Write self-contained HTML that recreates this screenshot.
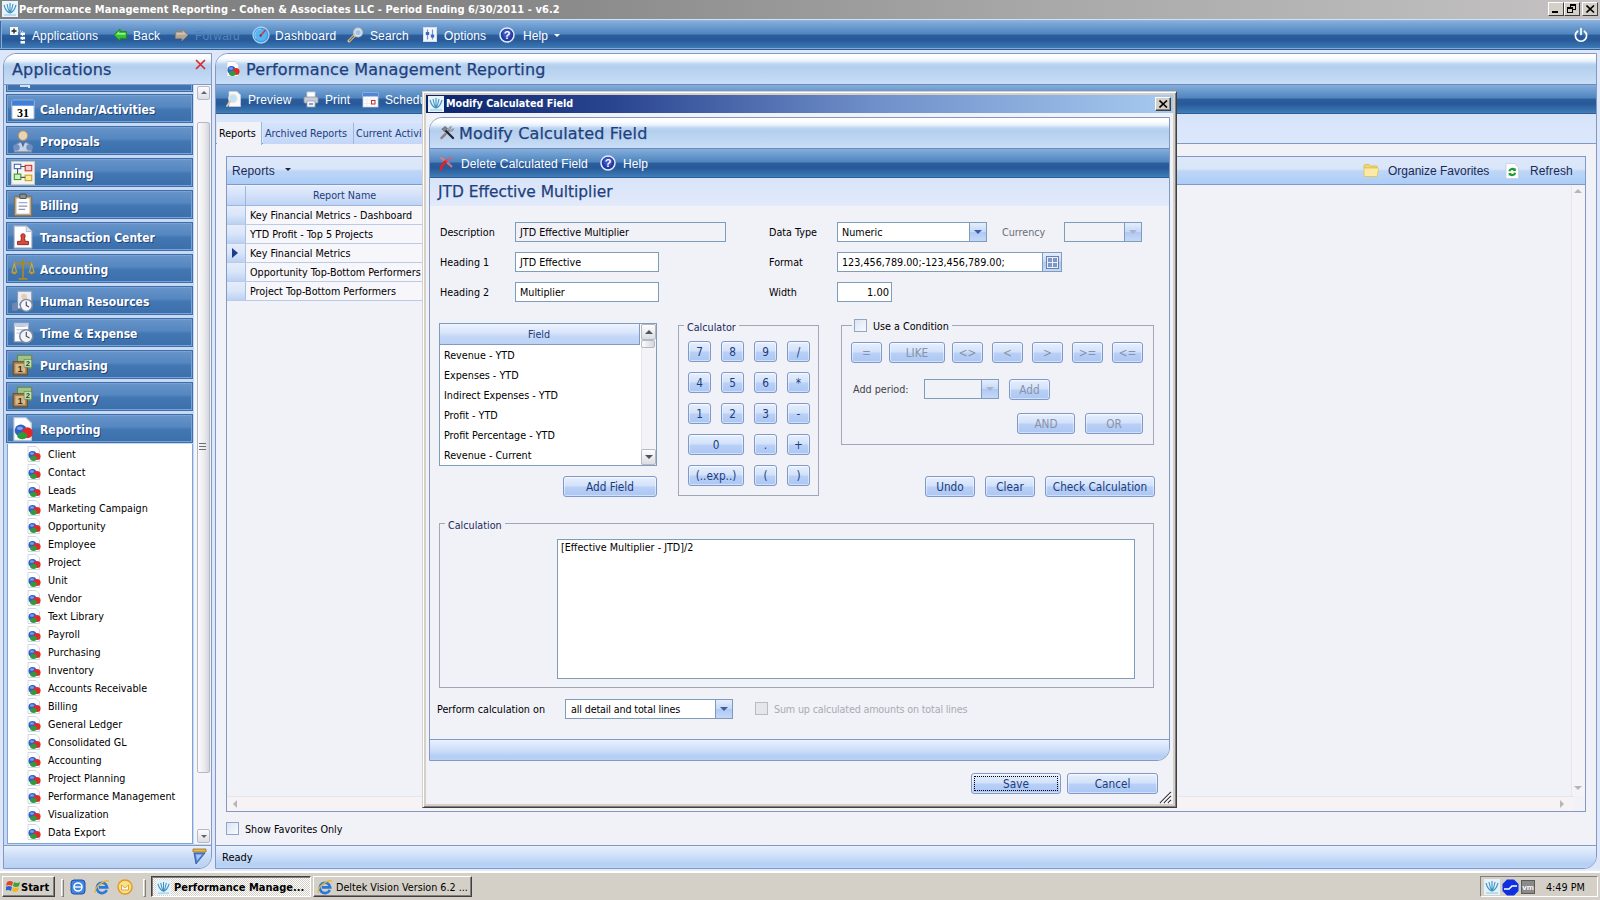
<!DOCTYPE html>
<html><head><meta charset="utf-8"><title>Performance Management Reporting</title>
<style>
*{box-sizing:border-box;margin:0;padding:0}
html,body{width:1600px;height:900px;overflow:hidden;background:#dde7f9}
body{position:relative;font-family:"DejaVu Sans Condensed","Liberation Sans",sans-serif;font-size:10.7px;color:#000}
.a{position:absolute;white-space:nowrap}
.tx{position:absolute;white-space:nowrap;line-height:14px;height:14px}
.ar{font-family:"Liberation Sans",sans-serif;font-size:12px;letter-spacing:.12px;color:#fff;line-height:14px;height:14px;position:absolute;white-space:nowrap}
.hd{position:absolute;white-space:nowrap;font-family:"DejaVu Sans",sans-serif;font-size:16px;color:#1f3f7d;line-height:22px;height:22px;letter-spacing:.15px;-webkit-text-stroke:.25px #1f3f7d}
.dk{background:linear-gradient(#86afdd 0%,#6e9dd0 18%,#5085be 46%,#2b5e9b 51%,#28599a 68%,#3570ac 88%,#457fba 100%)}
.lh{background:linear-gradient(#ffffff 0%,#fcfdff 13%,#e6f0fb 24%,#bcd5f0 34%,#b4cfed 44%,#c8ddf7 100%)}
.btn{position:absolute;border:1px solid #8099c8;border-radius:3px;background:linear-gradient(#f2f6fe 0%,#e1ebfc 12%,#d3e2fa 46%,#b9d0f6 54%,#abc7f4 100%);color:#1c3c7c;text-align:center;font-size:11.7px;line-height:19px;padding-top:1px;white-space:nowrap;box-shadow:inset 0 0 0 1px rgba(255,255,255,.45)}
.btn.dis{color:#8a93a6}
.inp{position:absolute;border:1px solid #7f9db9;background:#fff;line-height:19px;padding-left:4px;white-space:nowrap;overflow:hidden}
.dd{position:absolute;right:0;top:0;bottom:0;width:17px;border-left:1px solid #7f9db9;background:linear-gradient(#e4edfc,#c5d8f7 50%,#b0c9f3 52%,#c4d8f8)}
.dd:after{content:"";position:absolute;left:4px;top:7px;border:4px solid transparent;border-top:4px solid #3a5ea8;border-bottom:0}
.dd.dis:after{border-top-color:#a9b4c8}
.grp{position:absolute;border:1px solid #a0a8b8}
.lg{position:absolute;background:#f1f1f8;padding:0 3px;color:#1b2a5c;line-height:14px;height:14px;white-space:nowrap}
.nav{position:absolute;left:6px;width:187px;height:29px;border:1px solid #3f6ea6;box-shadow:inset 0 0 0 1px #7aa3d3;background:linear-gradient(#6795ca 0%,#5686bf 44%,#4177b3 54%,#3a6faa 100%)}
.nav b{position:absolute;left:33px;top:7px;font-size:12px;line-height:16px;color:#fff;letter-spacing:0;text-shadow:1px 1px 0 rgba(0,0,40,.45)}
.nav i{font-style:normal;position:absolute;left:4px;top:2px;width:24px;height:24px}
.tr{position:absolute;left:48px;line-height:14px;height:14px;white-space:nowrap}
.ti{position:absolute;left:26px;width:16px;height:16px}
.row{position:absolute;left:227px;width:197px;height:19px;border-bottom:1px solid #b9cbe8;background:#f6f6fb}
.row s{position:absolute;left:0;top:0;width:19px;height:18px;background:linear-gradient(#e6edfb,#d9e5f9 50%,#bcd1f2);border-right:1px solid #a9bfe3}
.row span{position:absolute;left:23px;top:3px;line-height:14px;white-space:nowrap}
.cb{position:absolute;width:13px;height:13px;border:1px solid #8da6c9;background:linear-gradient(135deg,#dde5f2,#f8fafd)}
</style></head><body>

<!-- ===== window title bar ===== -->
<div class="a" style="left:0;top:0;width:1600px;height:19px;background:linear-gradient(90deg,#7f7f7f 0%,#858585 30%,#a8a8a8 65%,#c4c2c2 100%)"></div>
<div class="a" style="left:0;top:19px;width:1600px;height:2px;background:#cfe1f8"></div>
<svg class="a" style="left:2px;top:1px" width="16" height="16" viewBox="0 0 16 16"><rect width="16" height="16" fill="#e8f4fb"/><path d="M2 4 Q4 11 8 12 Q12 11 14 4 M5 3 Q6 9 8 12 Q10 9 11 3 M8 2 V12" stroke="#3f93c4" stroke-width="1.1" fill="none"/><path d="M2 14 H14" stroke="#8cc4e0" stroke-width="1"/></svg>
<div class="tx" style="left:19px;top:3px;font-weight:bold;color:#fff;font-size:11px;letter-spacing:.08px">Performance Management Reporting - Cohen &amp; Associates LLC - Period Ending 6/30/2011 - v6.2</div>
<div class="a" style="left:1548px;top:2px;width:50px;height:14px">
 <div class="a" style="left:0;top:0;width:16px;height:14px;background:#d4d0c8;border:1px solid;border-color:#fff #404040 #404040 #fff"><div class="a" style="left:3px;top:8px;width:6px;height:2px;background:#000"></div></div>
 <div class="a" style="left:16px;top:0;width:16px;height:14px;background:#d4d0c8;border:1px solid;border-color:#fff #404040 #404040 #fff"><div class="a" style="left:5px;top:1px;width:6px;height:6px;border:1px solid #000;border-top-width:2px"></div><div class="a" style="left:2px;top:4px;width:6px;height:6px;border:1px solid #000;border-top-width:2px;background:#d4d0c8"></div></div>
 <div class="a" style="left:34px;top:0;width:16px;height:14px;background:#d4d0c8;border:1px solid;border-color:#fff #404040 #404040 #fff"><svg class="a" style="left:3px;top:2px" width="9" height="8" viewBox="0 0 9 8"><path d="M0.5 0.5 L8 7.5 M8 0.5 L0.5 7.5" stroke="#000" stroke-width="1.6"/></svg></div>
</div>


<!-- ===== menu toolbar ===== -->
<div class="a dk" style="left:0;top:20px;width:1600px;height:30px;border-top:1px solid #8fb2dc;border-bottom:1px solid #2f5f97;box-shadow:inset 0 -1px 0 #7fa9d9,inset 1px 0 0 #3a6aa5,inset 2px 0 0 #86add9"></div>
<svg class="a" style="left:10px;top:27px" width="16" height="17" viewBox="0 0 16 17"><rect x="0" y="0" width="8" height="8" fill="#f6f7fb"/><path d="M1.5 4 H6.5 M4 1.5 V6.5" stroke="#222" stroke-width="1.3"/><path d="M8 4 H12 M12.5 4 V15" stroke="#cfdcf0" stroke-width="1" stroke-dasharray="1 1"/><rect x="10.5" y="5.5" width="4.5" height="2.6" fill="#fff"/><rect x="10.5" y="9.8" width="4.5" height="2.6" fill="#fff"/><rect x="10.5" y="14" width="4.5" height="2.6" fill="#fff"/></svg>
<div class="ar" style="left:32px;top:29px">Applications</div>
<svg class="a" style="left:113px;top:28px" width="15" height="14" viewBox="0 0 15 14"><path d="M1 7 L7 1 V3.6 H13.5 V10.4 H7 V13 Z" fill="#35c432" stroke="#1c8e1e" stroke-width="1" stroke-linejoin="round"/><path d="M3 6.6 L6 3.6 V5 H12.4 V6.8 Z" fill="#b4f5a8" opacity=".85"/></svg>
<div class="ar" style="left:133px;top:29px">Back</div>
<svg class="a" style="left:174px;top:28px" width="15" height="14" viewBox="0 0 15 14"><path d="M14 7 L8 1 V3.6 H1.5 V10.4 H8 V13 Z" fill="#b5a595" stroke="#8c8072" stroke-width="1" stroke-linejoin="round"/><path d="M12 6.6 L9 3.6 V5 H2.6 V6.8 Z" fill="#d8ccc0" opacity=".8"/></svg>
<div class="ar" style="left:195px;top:29px;color:#5484bc">Forward</div>
<svg class="a" style="left:252px;top:26px" width="18" height="18" viewBox="0 0 18 18"><circle cx="9" cy="9" r="8" fill="#3f9ae6" stroke="#a9d2f2" stroke-width="1.3"/><circle cx="9" cy="9" r="6" fill="#57b4ee"/><path d="M4 12.5 A6 6 0 0 1 9 3" stroke="#8fd0f8" stroke-width="1" fill="none"/><path d="M8.5 9.8 L13 4.6" stroke="#d0383e" stroke-width="1.5" stroke-linecap="round"/><circle cx="8.6" cy="9.6" r="1.1" fill="#7a2a3a"/></svg>
<div class="ar" style="left:275px;top:29px;letter-spacing:.3px">Dashboard</div>
<svg class="a" style="left:347px;top:27px" width="17" height="16" viewBox="0 0 17 16"><path d="M2 14 L8 8" stroke="#d8c9a0" stroke-width="3" stroke-linecap="round"/><path d="M2 14 L7 9" stroke="#8a6e3a" stroke-width="1.2"/><circle cx="11" cy="5.5" r="4.2" fill="#dfe9f5" stroke="#c9c9c9" stroke-width="1.4"/><circle cx="11" cy="5.5" r="2.6" fill="#9ec3e8"/></svg>
<div class="ar" style="left:370px;top:29px">Search</div>
<svg class="a" style="left:423px;top:27px" width="15" height="15" viewBox="0 0 15 15"><rect x=".5" y=".5" width="13" height="14" fill="#f4f6fc" stroke="#d5dcec"/><path d="M4.5 2.5 V12.5 M9.5 2.5 V12.5" stroke="#6f95d4" stroke-width="1.2"/><rect x="2.8" y="5" width="3.4" height="3" fill="#3a68c0"/><rect x="7.8" y="7.5" width="3.4" height="3" fill="#3a68c0"/></svg>
<div class="ar" style="left:444px;top:29px">Options</div>
<svg class="a" style="left:499px;top:27px" width="16" height="16" viewBox="0 0 16 16"><circle cx="8" cy="8" r="7" fill="#2438a4" stroke="#e4eafa" stroke-width="1.5"/><circle cx="8" cy="6.5" r="4.5" fill="#4a66d0" opacity=".6"/><text x="8" y="12" text-anchor="middle" font-family="Liberation Sans" font-weight="bold" font-size="11" fill="#fff">?</text></svg>
<div class="ar" style="left:523px;top:29px">Help</div>
<div class="a" style="left:554px;top:34px;border:3px solid transparent;border-top:3px solid #fff;border-bottom:0"></div>
<svg class="a" style="left:1573px;top:27px" width="16" height="16" viewBox="0 0 16 16"><path d="M4.6 4.2 A5.6 5.6 0 1 0 11.4 4.2" fill="none" stroke="#fff" stroke-width="1.7" stroke-linecap="round"/><path d="M8 1.5 V7.5" stroke="#fff" stroke-width="1.7" stroke-linecap="round"/></svg>


<!-- ===== left panel ===== -->
<!--LP-->
<div class="a" style="left:3px;top:53px;width:209px;height:816px;border:1px solid #8299c4;border-radius:13px 0 13px 0;background:#c6daf5;overflow:hidden">
<div class="a lh" style="left:0;top:0;width:207px;height:31px;border-bottom:1px solid #8299c4"></div>
<div class="a" style="left:0;top:791px;width:207px;height:23px;border-top:1px solid #8299c4;background:linear-gradient(#e8f0fd,#c6daf6 55%,#b8d0f2)"></div>
</div>
<div class="hd" style="left:12px;top:59px">Applications</div>
<svg class="a" style="left:195px;top:59px" width="11" height="11" viewBox="0 0 11 11"><path d="M1 1 L10 10 M10 1 L1 10" stroke="#d9282e" stroke-width="1.7"/></svg>
<div class="nav" style="top:76px;height:16px;clip-path:inset(9px 0 0 0)"></div>
<div class="a" style="left:20px;top:85px;width:10px;height:2px;background:#cfe0f5"></div><div class="a" style="left:28px;top:85px;width:2px;height:3px;background:#dfe8f5"></div>
<div class="nav" style="top:94px"><i><svg width="24" height="24" viewBox="0 0 22 22"><rect x="1" y="3" width="20" height="17" rx="1" fill="#fff" stroke="#c8d4e8"/><rect x="1" y="3" width="20" height="5" fill="#3f7fd8"/><text x="11" y="18" text-anchor="middle" font-family="Liberation Serif" font-weight="bold" font-size="11" fill="#000">31</text></svg></i><b>Calendar/Activities</b></div>
<div class="nav" style="top:126px"><i><svg width="24" height="24" viewBox="0 0 22 22"><circle cx="11" cy="6" r="4.5" fill="#e9d3b8" stroke="#a08a70"/><path d="M3 21 Q3 12 11 12 Q19 12 19 21 Z" fill="#c9d2de" stroke="#7f8ea6"/><path d="M9 12 L11 17 L13 12 Z" fill="#3d6fc0"/><circle cx="5" cy="17" r="3" fill="#6f8fc4"/><circle cx="17" cy="17" r="3" fill="#6f8fc4"/></svg></i><b>Proposals</b></div>
<div class="nav" style="top:158px"><i><svg width="24" height="24" viewBox="0 0 22 22"><rect x=".5" y=".5" width="21" height="21" fill="#f5f5f0" stroke="#c9c9c0"/><rect x="3" y="3" width="6" height="4" fill="#fff" stroke="#3a66c0"/><rect x="13" y="4" width="6" height="5" fill="#f9c9c9" stroke="#d03030"/><rect x="3" y="12" width="6" height="5" fill="#d0f0c0" stroke="#3a9a30"/><rect x="13" y="13" width="6" height="5" fill="#fbe9a0" stroke="#c9a020"/><path d="M6 7 V12 M9 5 H13 M9 15 H13" stroke="#555" stroke-width="1"/></svg></i><b>Planning</b></div>
<div class="nav" style="top:190px"><i><svg width="24" height="24" viewBox="0 0 22 22"><rect x="3" y="3" width="16" height="18" rx="1" fill="#b8a88c" stroke="#7d6e54"/><rect x="5" y="5" width="12" height="14" fill="#fff"/><rect x="8" y="1" width="6" height="4" rx="1" fill="#8f8f8f" stroke="#555"/><path d="M7 9 H15 M7 12 H15 M7 15 H13" stroke="#8a96b0" stroke-width="1"/></svg></i><b>Billing</b></div>
<div class="nav" style="top:222px"><i><svg width="24" height="24" viewBox="0 0 22 22"><path d="M3 1 H14 L19 6 V21 H3 Z" fill="#fff" stroke="#b9c2d2"/><path d="M14 1 V6 H19" fill="#dfe6f2" stroke="#b9c2d2"/><path d="M6 18 H16 V15 H13 Q12 12 13 10 Q13 8 11 8 Q9 8 9 10 Q10 12 9 15 H6 Z" fill="#d94a3a" stroke="#8e241a" stroke-width=".8"/></svg></i><b>Transaction Center</b></div>
<div class="nav" style="top:254px"><i><svg width="24" height="24" viewBox="0 0 22 22"><path d="M11 2 V19 M3 6 H19 M7 20 H15" stroke="#a98a20" stroke-width="1.6"/><path d="M3 6 L0.8 14 H5.2 Z M19 6 L16.8 14 H21.2 Z" fill="none" stroke="#c9a83a" stroke-width="1"/><path d="M.5 14 Q3 17 5.5 14 Z M16.5 14 Q19 17 21.5 14 Z" fill="#e4c860" stroke="#a98a20" stroke-width=".8"/></svg></i><b>Accounting</b></div>
<div class="nav" style="top:286px"><i><svg width="24" height="24" viewBox="0 0 22 22"><rect x="6" y="2" width="13" height="16" fill="#e9eef6" stroke="#8d9bb4"/><circle cx="12" cy="7" r="2.6" fill="#e8cdb0"/><path d="M7.5 15 Q8 10.5 12 10.5 Q16 10.5 16.5 15 Z" fill="#5b7fc0"/><circle cx="14" cy="15" r="5.5" fill="#f4f6fa" stroke="#7f8aa0" stroke-width="1.3"/><path d="M14 11.5 V15 L16.5 16.5" stroke="#445" stroke-width="1" fill="none"/><path d="M1 13 L6 12 V20 H1 Z" fill="#6f86b0"/></svg></i><b>Human Resources</b></div>
<div class="nav" style="top:318px"><i><svg width="24" height="24" viewBox="0 0 22 22"><rect x="3" y="2" width="13" height="17" fill="#fff" stroke="#9aa6bc"/><path d="M5 5 H13 M5 8 H13 M5 11 H10" stroke="#b5bfd2"/><rect x="3" y="2" width="13" height="3" fill="#c4cfe2"/><circle cx="14" cy="14" r="6" fill="#f1f3f8" stroke="#7f8aa0" stroke-width="1.4"/><path d="M14 10 V14 L17 15.5" stroke="#445" stroke-width="1" fill="none"/></svg></i><b>Time &amp; Expense</b></div>
<div class="nav" style="top:350px"><i><svg width="24" height="24" viewBox="0 0 22 22"><rect x="6" y="2" width="13" height="12" fill="#9fc48a" stroke="#5d8a4a"/><rect x="2" y="8" width="13" height="12" fill="#a9824f" stroke="#6b4e28"/><rect x="4" y="10" width="9" height="8" fill="#d9b98a"/><text x="8.5" y="17.5" text-anchor="middle" font-family="Liberation Sans" font-weight="bold" font-size="8" fill="#3a2a10">1</text><rect x="12" y="6" width="7" height="7" fill="#c9dfb8" stroke="#5d8a4a" stroke-width=".6"/><text x="15.5" y="12" text-anchor="middle" font-family="Liberation Sans" font-weight="bold" font-size="7" fill="#2a4a1a">2</text></svg></i><b>Purchasing</b></div>
<div class="nav" style="top:382px"><i><svg width="24" height="24" viewBox="0 0 22 22"><rect x="6" y="2" width="13" height="12" fill="#9fc48a" stroke="#5d8a4a"/><rect x="2" y="8" width="13" height="12" fill="#a9824f" stroke="#6b4e28"/><rect x="4" y="10" width="9" height="8" fill="#d9b98a"/><text x="8.5" y="17.5" text-anchor="middle" font-family="Liberation Sans" font-weight="bold" font-size="8" fill="#3a2a10">1</text><rect x="12" y="6" width="7" height="7" fill="#c9dfb8" stroke="#5d8a4a" stroke-width=".6"/><text x="15.5" y="12" text-anchor="middle" font-family="Liberation Sans" font-weight="bold" font-size="7" fill="#2a4a1a">2</text></svg></i><b>Inventory</b></div>
<div class="nav" style="top:414px"><i><svg width="24" height="24" viewBox="0 0 16 16"><path d="M2 .5 H10 L13.5 4 V15.5 H2 Z" fill="#fff" stroke="#c5cede" stroke-width=".8"/><circle cx="6.5" cy="9" r="4" fill="#2f5fc8"/><circle cx="11" cy="10.5" r="3.6" fill="#e02a2a"/><ellipse cx="7.5" cy="12.5" rx="3.4" ry="2.4" fill="#2f9a3a"/><ellipse cx="6" cy="7.5" rx="2" ry="1.2" fill="#8fb0ee" opacity=".8"/></svg></i><b>Reporting</b></div>
<div class="a" style="left:7px;top:444px;width:186px;height:400px;background:#fff;border:1px solid #7fa3d8;border-top:0"></div>
<div class="ti" style="top:446px"><svg width="16" height="16" viewBox="0 0 16 16"><path d="M2 .5 H10 L13.5 4 V15.5 H2 Z" fill="#fff" stroke="#c5cede" stroke-width=".8"/><circle cx="6.5" cy="9" r="4" fill="#2f5fc8"/><circle cx="11" cy="10.5" r="3.6" fill="#e02a2a"/><ellipse cx="7.5" cy="12.5" rx="3.4" ry="2.4" fill="#2f9a3a"/><ellipse cx="6" cy="7.5" rx="2" ry="1.2" fill="#8fb0ee" opacity=".8"/></svg></div><div class="tr" style="top:448px">Client</div>
<div class="ti" style="top:464px"><svg width="16" height="16" viewBox="0 0 16 16"><path d="M2 .5 H10 L13.5 4 V15.5 H2 Z" fill="#fff" stroke="#c5cede" stroke-width=".8"/><circle cx="6.5" cy="9" r="4" fill="#2f5fc8"/><circle cx="11" cy="10.5" r="3.6" fill="#e02a2a"/><ellipse cx="7.5" cy="12.5" rx="3.4" ry="2.4" fill="#2f9a3a"/><ellipse cx="6" cy="7.5" rx="2" ry="1.2" fill="#8fb0ee" opacity=".8"/></svg></div><div class="tr" style="top:466px">Contact</div>
<div class="ti" style="top:482px"><svg width="16" height="16" viewBox="0 0 16 16"><path d="M2 .5 H10 L13.5 4 V15.5 H2 Z" fill="#fff" stroke="#c5cede" stroke-width=".8"/><circle cx="6.5" cy="9" r="4" fill="#2f5fc8"/><circle cx="11" cy="10.5" r="3.6" fill="#e02a2a"/><ellipse cx="7.5" cy="12.5" rx="3.4" ry="2.4" fill="#2f9a3a"/><ellipse cx="6" cy="7.5" rx="2" ry="1.2" fill="#8fb0ee" opacity=".8"/></svg></div><div class="tr" style="top:484px">Leads</div>
<div class="ti" style="top:500px"><svg width="16" height="16" viewBox="0 0 16 16"><path d="M2 .5 H10 L13.5 4 V15.5 H2 Z" fill="#fff" stroke="#c5cede" stroke-width=".8"/><circle cx="6.5" cy="9" r="4" fill="#2f5fc8"/><circle cx="11" cy="10.5" r="3.6" fill="#e02a2a"/><ellipse cx="7.5" cy="12.5" rx="3.4" ry="2.4" fill="#2f9a3a"/><ellipse cx="6" cy="7.5" rx="2" ry="1.2" fill="#8fb0ee" opacity=".8"/></svg></div><div class="tr" style="top:502px">Marketing Campaign</div>
<div class="ti" style="top:518px"><svg width="16" height="16" viewBox="0 0 16 16"><path d="M2 .5 H10 L13.5 4 V15.5 H2 Z" fill="#fff" stroke="#c5cede" stroke-width=".8"/><circle cx="6.5" cy="9" r="4" fill="#2f5fc8"/><circle cx="11" cy="10.5" r="3.6" fill="#e02a2a"/><ellipse cx="7.5" cy="12.5" rx="3.4" ry="2.4" fill="#2f9a3a"/><ellipse cx="6" cy="7.5" rx="2" ry="1.2" fill="#8fb0ee" opacity=".8"/></svg></div><div class="tr" style="top:520px">Opportunity</div>
<div class="ti" style="top:536px"><svg width="16" height="16" viewBox="0 0 16 16"><path d="M2 .5 H10 L13.5 4 V15.5 H2 Z" fill="#fff" stroke="#c5cede" stroke-width=".8"/><circle cx="6.5" cy="9" r="4" fill="#2f5fc8"/><circle cx="11" cy="10.5" r="3.6" fill="#e02a2a"/><ellipse cx="7.5" cy="12.5" rx="3.4" ry="2.4" fill="#2f9a3a"/><ellipse cx="6" cy="7.5" rx="2" ry="1.2" fill="#8fb0ee" opacity=".8"/></svg></div><div class="tr" style="top:538px">Employee</div>
<div class="ti" style="top:554px"><svg width="16" height="16" viewBox="0 0 16 16"><path d="M2 .5 H10 L13.5 4 V15.5 H2 Z" fill="#fff" stroke="#c5cede" stroke-width=".8"/><circle cx="6.5" cy="9" r="4" fill="#2f5fc8"/><circle cx="11" cy="10.5" r="3.6" fill="#e02a2a"/><ellipse cx="7.5" cy="12.5" rx="3.4" ry="2.4" fill="#2f9a3a"/><ellipse cx="6" cy="7.5" rx="2" ry="1.2" fill="#8fb0ee" opacity=".8"/></svg></div><div class="tr" style="top:556px">Project</div>
<div class="ti" style="top:572px"><svg width="16" height="16" viewBox="0 0 16 16"><path d="M2 .5 H10 L13.5 4 V15.5 H2 Z" fill="#fff" stroke="#c5cede" stroke-width=".8"/><circle cx="6.5" cy="9" r="4" fill="#2f5fc8"/><circle cx="11" cy="10.5" r="3.6" fill="#e02a2a"/><ellipse cx="7.5" cy="12.5" rx="3.4" ry="2.4" fill="#2f9a3a"/><ellipse cx="6" cy="7.5" rx="2" ry="1.2" fill="#8fb0ee" opacity=".8"/></svg></div><div class="tr" style="top:574px">Unit</div>
<div class="ti" style="top:590px"><svg width="16" height="16" viewBox="0 0 16 16"><path d="M2 .5 H10 L13.5 4 V15.5 H2 Z" fill="#fff" stroke="#c5cede" stroke-width=".8"/><circle cx="6.5" cy="9" r="4" fill="#2f5fc8"/><circle cx="11" cy="10.5" r="3.6" fill="#e02a2a"/><ellipse cx="7.5" cy="12.5" rx="3.4" ry="2.4" fill="#2f9a3a"/><ellipse cx="6" cy="7.5" rx="2" ry="1.2" fill="#8fb0ee" opacity=".8"/></svg></div><div class="tr" style="top:592px">Vendor</div>
<div class="ti" style="top:608px"><svg width="16" height="16" viewBox="0 0 16 16"><path d="M2 .5 H10 L13.5 4 V15.5 H2 Z" fill="#fff" stroke="#c5cede" stroke-width=".8"/><circle cx="6.5" cy="9" r="4" fill="#2f5fc8"/><circle cx="11" cy="10.5" r="3.6" fill="#e02a2a"/><ellipse cx="7.5" cy="12.5" rx="3.4" ry="2.4" fill="#2f9a3a"/><ellipse cx="6" cy="7.5" rx="2" ry="1.2" fill="#8fb0ee" opacity=".8"/></svg></div><div class="tr" style="top:610px">Text Library</div>
<div class="ti" style="top:626px"><svg width="16" height="16" viewBox="0 0 16 16"><path d="M2 .5 H10 L13.5 4 V15.5 H2 Z" fill="#fff" stroke="#c5cede" stroke-width=".8"/><circle cx="6.5" cy="9" r="4" fill="#2f5fc8"/><circle cx="11" cy="10.5" r="3.6" fill="#e02a2a"/><ellipse cx="7.5" cy="12.5" rx="3.4" ry="2.4" fill="#2f9a3a"/><ellipse cx="6" cy="7.5" rx="2" ry="1.2" fill="#8fb0ee" opacity=".8"/></svg></div><div class="tr" style="top:628px">Payroll</div>
<div class="ti" style="top:644px"><svg width="16" height="16" viewBox="0 0 16 16"><path d="M2 .5 H10 L13.5 4 V15.5 H2 Z" fill="#fff" stroke="#c5cede" stroke-width=".8"/><circle cx="6.5" cy="9" r="4" fill="#2f5fc8"/><circle cx="11" cy="10.5" r="3.6" fill="#e02a2a"/><ellipse cx="7.5" cy="12.5" rx="3.4" ry="2.4" fill="#2f9a3a"/><ellipse cx="6" cy="7.5" rx="2" ry="1.2" fill="#8fb0ee" opacity=".8"/></svg></div><div class="tr" style="top:646px">Purchasing</div>
<div class="ti" style="top:662px"><svg width="16" height="16" viewBox="0 0 16 16"><path d="M2 .5 H10 L13.5 4 V15.5 H2 Z" fill="#fff" stroke="#c5cede" stroke-width=".8"/><circle cx="6.5" cy="9" r="4" fill="#2f5fc8"/><circle cx="11" cy="10.5" r="3.6" fill="#e02a2a"/><ellipse cx="7.5" cy="12.5" rx="3.4" ry="2.4" fill="#2f9a3a"/><ellipse cx="6" cy="7.5" rx="2" ry="1.2" fill="#8fb0ee" opacity=".8"/></svg></div><div class="tr" style="top:664px">Inventory</div>
<div class="ti" style="top:680px"><svg width="16" height="16" viewBox="0 0 16 16"><path d="M2 .5 H10 L13.5 4 V15.5 H2 Z" fill="#fff" stroke="#c5cede" stroke-width=".8"/><circle cx="6.5" cy="9" r="4" fill="#2f5fc8"/><circle cx="11" cy="10.5" r="3.6" fill="#e02a2a"/><ellipse cx="7.5" cy="12.5" rx="3.4" ry="2.4" fill="#2f9a3a"/><ellipse cx="6" cy="7.5" rx="2" ry="1.2" fill="#8fb0ee" opacity=".8"/></svg></div><div class="tr" style="top:682px">Accounts Receivable</div>
<div class="ti" style="top:698px"><svg width="16" height="16" viewBox="0 0 16 16"><path d="M2 .5 H10 L13.5 4 V15.5 H2 Z" fill="#fff" stroke="#c5cede" stroke-width=".8"/><circle cx="6.5" cy="9" r="4" fill="#2f5fc8"/><circle cx="11" cy="10.5" r="3.6" fill="#e02a2a"/><ellipse cx="7.5" cy="12.5" rx="3.4" ry="2.4" fill="#2f9a3a"/><ellipse cx="6" cy="7.5" rx="2" ry="1.2" fill="#8fb0ee" opacity=".8"/></svg></div><div class="tr" style="top:700px">Billing</div>
<div class="ti" style="top:716px"><svg width="16" height="16" viewBox="0 0 16 16"><path d="M2 .5 H10 L13.5 4 V15.5 H2 Z" fill="#fff" stroke="#c5cede" stroke-width=".8"/><circle cx="6.5" cy="9" r="4" fill="#2f5fc8"/><circle cx="11" cy="10.5" r="3.6" fill="#e02a2a"/><ellipse cx="7.5" cy="12.5" rx="3.4" ry="2.4" fill="#2f9a3a"/><ellipse cx="6" cy="7.5" rx="2" ry="1.2" fill="#8fb0ee" opacity=".8"/></svg></div><div class="tr" style="top:718px">General Ledger</div>
<div class="ti" style="top:734px"><svg width="16" height="16" viewBox="0 0 16 16"><path d="M2 .5 H10 L13.5 4 V15.5 H2 Z" fill="#fff" stroke="#c5cede" stroke-width=".8"/><circle cx="6.5" cy="9" r="4" fill="#2f5fc8"/><circle cx="11" cy="10.5" r="3.6" fill="#e02a2a"/><ellipse cx="7.5" cy="12.5" rx="3.4" ry="2.4" fill="#2f9a3a"/><ellipse cx="6" cy="7.5" rx="2" ry="1.2" fill="#8fb0ee" opacity=".8"/></svg></div><div class="tr" style="top:736px">Consolidated GL</div>
<div class="ti" style="top:752px"><svg width="16" height="16" viewBox="0 0 16 16"><path d="M2 .5 H10 L13.5 4 V15.5 H2 Z" fill="#fff" stroke="#c5cede" stroke-width=".8"/><circle cx="6.5" cy="9" r="4" fill="#2f5fc8"/><circle cx="11" cy="10.5" r="3.6" fill="#e02a2a"/><ellipse cx="7.5" cy="12.5" rx="3.4" ry="2.4" fill="#2f9a3a"/><ellipse cx="6" cy="7.5" rx="2" ry="1.2" fill="#8fb0ee" opacity=".8"/></svg></div><div class="tr" style="top:754px">Accounting</div>
<div class="ti" style="top:770px"><svg width="16" height="16" viewBox="0 0 16 16"><path d="M2 .5 H10 L13.5 4 V15.5 H2 Z" fill="#fff" stroke="#c5cede" stroke-width=".8"/><circle cx="6.5" cy="9" r="4" fill="#2f5fc8"/><circle cx="11" cy="10.5" r="3.6" fill="#e02a2a"/><ellipse cx="7.5" cy="12.5" rx="3.4" ry="2.4" fill="#2f9a3a"/><ellipse cx="6" cy="7.5" rx="2" ry="1.2" fill="#8fb0ee" opacity=".8"/></svg></div><div class="tr" style="top:772px">Project Planning</div>
<div class="ti" style="top:788px"><svg width="16" height="16" viewBox="0 0 16 16"><path d="M2 .5 H10 L13.5 4 V15.5 H2 Z" fill="#fff" stroke="#c5cede" stroke-width=".8"/><circle cx="6.5" cy="9" r="4" fill="#2f5fc8"/><circle cx="11" cy="10.5" r="3.6" fill="#e02a2a"/><ellipse cx="7.5" cy="12.5" rx="3.4" ry="2.4" fill="#2f9a3a"/><ellipse cx="6" cy="7.5" rx="2" ry="1.2" fill="#8fb0ee" opacity=".8"/></svg></div><div class="tr" style="top:790px">Performance Management</div>
<div class="ti" style="top:806px"><svg width="16" height="16" viewBox="0 0 16 16"><path d="M2 .5 H10 L13.5 4 V15.5 H2 Z" fill="#fff" stroke="#c5cede" stroke-width=".8"/><circle cx="6.5" cy="9" r="4" fill="#2f5fc8"/><circle cx="11" cy="10.5" r="3.6" fill="#e02a2a"/><ellipse cx="7.5" cy="12.5" rx="3.4" ry="2.4" fill="#2f9a3a"/><ellipse cx="6" cy="7.5" rx="2" ry="1.2" fill="#8fb0ee" opacity=".8"/></svg></div><div class="tr" style="top:808px">Visualization</div>
<div class="ti" style="top:824px"><svg width="16" height="16" viewBox="0 0 16 16"><path d="M2 .5 H10 L13.5 4 V15.5 H2 Z" fill="#fff" stroke="#c5cede" stroke-width=".8"/><circle cx="6.5" cy="9" r="4" fill="#2f5fc8"/><circle cx="11" cy="10.5" r="3.6" fill="#e02a2a"/><ellipse cx="7.5" cy="12.5" rx="3.4" ry="2.4" fill="#2f9a3a"/><ellipse cx="6" cy="7.5" rx="2" ry="1.2" fill="#8fb0ee" opacity=".8"/></svg></div><div class="tr" style="top:826px">Data Export</div>
<div class="a" style="left:194px;top:85px;width:17px;height:759px;background:#f4f4f9"></div>
<div class="a" style="left:197px;top:86px;width:13px;height:14px;border:1px solid #b4b9c6;border-radius:2px;background:linear-gradient(#fdfdfd,#dcdde3)"></div><div class="a" style="left:201px;top:91px;border:3px solid transparent;border-bottom:3px solid #5f6472;border-top:0"></div>
<div class="a" style="left:197px;top:122px;width:13px;height:651px;border:1px solid #b4b9c6;border-radius:2px;background:linear-gradient(90deg,#fcfcfd,#e9e9ee 60%,#d5d6dd)"></div>
<div class="a" style="left:199px;top:443px;width:7px;height:1px;background:#6a6f7c;box-shadow:0 3px 0 #6a6f7c,0 6px 0 #6a6f7c"></div>
<div class="a" style="left:197px;top:829px;width:13px;height:14px;border:1px solid #b4b9c6;border-radius:2px;background:linear-gradient(#fdfdfd,#dcdde3)"></div><div class="a" style="left:201px;top:835px;border:3px solid transparent;border-top:3px solid #5f6472;border-bottom:0"></div>
<svg class="a" style="left:192px;top:848px" width="16" height="17" viewBox="0 0 16 17"><path d="M1 1 H14 V4 H1 Z" fill="#e9b84a" stroke="#9a6e20" stroke-width=".8"/><path d="M2 5 H13 L4 16 Z" fill="#4f86d8" stroke="#2a4e9a" stroke-width=".8"/><path d="M4 6.5 H10 L5 12.5 Z" fill="#a9c8f4"/></svg>
<!--/LP-->

<!-- ===== main panel ===== -->
<!--MP-->
<div class="a" style="left:215px;top:53px;width:1382px;height:816px;border:1px solid #8299c4;border-radius:13px 0 13px 0;background:#f1f1f8;overflow:hidden">
<div class="a lh" style="left:0;top:0;width:1380px;height:31px;border-bottom:1px solid #7088b8"></div>
<div class="a dk" style="left:0;top:31px;width:1380px;height:29px;border-bottom:1px solid #2c5e98"></div>
<div class="a" style="left:0;top:60px;width:1380px;height:30px;background:linear-gradient(#d6e4fb,#dbe7fb);border-bottom:1px solid #8299c4"></div>
<div class="a" style="left:1px;top:68px;width:45px;height:23px;background:#f1f1f8;border-right:1px solid #9ab7e0"></div>
<div class="a" style="left:47px;top:68px;width:91px;height:22px;background:linear-gradient(#d5e3fa,#c3d7f8);border-right:1px solid #9ab7e0;border-top:1px solid #dbe7fb"></div>
<div class="a" style="left:138px;top:68px;width:120px;height:22px;background:linear-gradient(#d5e3fa,#c3d7f8);border-right:1px solid #9ab7e0;border-top:1px solid #dbe7fb"></div>
<div class="a" style="left:0;top:791px;width:1380px;height:23px;border-top:1px solid #8299c4;background:linear-gradient(#e8f0fd,#cfe0f9 45%,#b4cff3 85%,#bdd5f5)"></div>
</div>
<div class="a" style="left:225px;top:61px"><svg width="16" height="16" viewBox="0 0 16 16"><path d="M2 .5 H10 L13.5 4 V15.5 H2 Z" fill="#fff" stroke="#c5cede" stroke-width=".8"/><circle cx="6.5" cy="9" r="4" fill="#2f5fc8"/><circle cx="11" cy="10.5" r="3.6" fill="#e02a2a"/><ellipse cx="7.5" cy="12.5" rx="3.4" ry="2.4" fill="#2f9a3a"/><ellipse cx="6" cy="7.5" rx="2" ry="1.2" fill="#8fb0ee" opacity=".8"/></svg></div>
<div class="hd" style="left:246px;top:59px">Performance Management Reporting</div>
<svg class="a" style="left:226px;top:91px" width="15" height="17" viewBox="0 0 15 17"><path d="M3 .5 H11 L14.5 4 V15.5 H3 Z" fill="#f7f9fd" stroke="#c5cede" stroke-width=".8"/><circle cx="7" cy="7.5" r="4" fill="#bfe0f7" stroke="#e9e4d8" stroke-width="1.5"/><path d="M4 10.5 L1 15" stroke="#d9c9a0" stroke-width="2" stroke-linecap="round"/></svg>
<div class="ar" style="left:248px;top:93px">Preview</div>
<svg class="a" style="left:303px;top:91px" width="16" height="17" viewBox="0 0 16 17"><rect x="4" y="1" width="8" height="6" fill="#fff" stroke="#c9ced8" stroke-width=".8"/><rect x="1" y="6" width="14" height="6" rx="1" fill="#c9cdd6" stroke="#8f96a4" stroke-width=".8"/><rect x="4" y="10" width="8" height="6" fill="#f4f6fa" stroke="#9aa2b2" stroke-width=".8"/><rect x="6" y="12" width="4" height="2" fill="#7f9fd0"/></svg>
<div class="ar" style="left:325px;top:93px">Print</div>
<svg class="a" style="left:362px;top:91px" width="17" height="17" viewBox="0 0 17 17"><rect x="1" y="2" width="15" height="14" fill="#fff" stroke="#c5cede" stroke-width=".8"/><rect x="1" y="2" width="15" height="3.5" fill="#4f86d8"/><path d="M1 9 H16 M1 12.5 H16 M5 5.5 V16 M9 5.5 V16 M12.5 5.5 V16" stroke="#e2e6ee" stroke-width=".7"/><rect x="9.5" y="9.5" width="3.5" height="3.5" fill="#fff" stroke="#c03028" stroke-width="1"/></svg>
<div class="ar" style="left:385px;top:93px">Schedule</div>
<div class="tx" style="left:219px;top:127px">Reports</div>
<div class="tx" style="left:265px;top:127px;color:#1c3c7c">Archived Reports</div>
<div class="tx" style="left:356px;top:127px;color:#1c3c7c">Current Activity</div>
<div class="a" style="left:226px;top:156px;width:1360px;height:656px;border:1px solid #8299c4;background:#f1f1f8"></div>
<div class="a" style="left:227px;top:157px;width:1358px;height:28px;background:linear-gradient(#dde8fa 0%,#d9e5f9 44%,#bfd6f6 52%,#aacdf8 100%);border-bottom:1px solid #8299c4"></div>
<div class="ar" style="left:232px;top:164px;color:#1a2a55">Reports</div>
<div class="a" style="left:285px;top:168px;border:3px solid transparent;border-top:3px solid #223;border-bottom:0"></div>
<svg class="a" style="left:1363px;top:163px" width="17" height="15" viewBox="0 0 17 15"><path d="M1 3 Q1 1.5 2.5 1.5 H6 L7.5 3 H13 Q14.5 3 14.5 4.5 V5 H1 Z" fill="#f0d676" stroke="#d9b84a" stroke-width=".8"/><path d="M1 13.5 V5 H14.5 Q16 5 15.5 6.5 L14 13.5 Z" fill="#fbe9a4" stroke="#e0c25a" stroke-width=".8"/></svg>
<div class="ar" style="left:1388px;top:164px;color:#1a2a55;letter-spacing:0">Organize Favorites</div>
<svg class="a" style="left:1505px;top:163px" width="15" height="16" viewBox="0 0 15 16"><path d="M1 .5 H9.5 L13.5 4.5 V15.5 H1 Z" fill="#fff" stroke="#c5cede" stroke-width=".8"/><path d="M9.8 7 A3.2 3.2 0 0 0 4.3 8.3" stroke="#1f9a30" stroke-width="2.2" fill="none"/><path d="M4.7 11 A3.2 3.2 0 0 0 10.2 9.7" stroke="#1f9a30" stroke-width="2.2" fill="none"/><path d="M10.8 5 V8 H7.8 Z M3.7 13 V10 H6.7 Z" fill="#1f9a30"/></svg>
<div class="ar" style="left:1530px;top:164px;color:#1a2a55">Refresh</div>
<div class="a" style="left:227px;top:186px;width:197px;height:20px;background:linear-gradient(#e3ecfc,#d3e1f9 50%,#c0d4f4);border-bottom:1px solid #9ab7e0"></div>
<div class="a" style="left:227px;top:186px;width:19px;height:19px;border-right:1px solid #9ab7e0"></div>
<div class="tx" style="left:313px;top:189px;color:#1c3c7c">Report Name</div>
<div class="row" style="top:206px"><s></s><span>Key Financial Metrics - Dashboard</span></div>
<div class="row" style="top:225px"><s></s><span>YTD Profit - Top 5 Projects</span></div>
<div class="row" style="top:244px"><s></s><div class="a" style="left:5px;top:4px;border:5px solid transparent;border-left:6px solid #1c3c8c;border-right:0"></div><span>Key Financial Metrics</span></div>
<div class="row" style="top:263px"><s></s><span>Opportunity Top-Bottom Performers</span></div>
<div class="row" style="top:282px"><s></s><span>Project Top-Bottom Performers</span></div>
<div class="a" style="left:1571px;top:186px;width:14px;height:610px;background:#f4f3f8;border-left:1px solid #e6e6ee"></div>
<div class="a" style="left:1574px;top:189px;border:4px solid transparent;border-bottom:4px solid #b4b6be;border-top:0"></div>
<div class="a" style="left:1574px;top:786px;border:4px solid transparent;border-top:4px solid #b4b6be;border-bottom:0"></div>
<div class="a" style="left:227px;top:796px;width:1347px;height:15px;background:#f7f3f5;border-top:1px solid #e6e5ec"></div>
<div class="a" style="left:233px;top:800px;border:4px solid transparent;border-right:4px solid #b4b6be;border-left:0"></div>
<div class="a" style="left:1560px;top:800px;border:4px solid transparent;border-left:4px solid #b4b6be;border-right:0"></div>
<div class="cb" style="left:226px;top:822px"></div>
<div class="tx" style="left:245px;top:823px">Show Favorites Only</div>
<div class="tx" style="left:222px;top:851px;font-size:11px">Ready</div>
<!--/MP-->

<!-- ===== dialog ===== -->
<!--DG-->
<div class="a" style="left:422px;top:91px;width:755px;height:717px;background:#f1f1f8;border:1px solid;border-color:#d4d0c8 #404040 #404040 #d4d0c8;box-shadow:inset 1px 1px 0 #fff,inset -1px -1px 0 #808080,inset 0 0 0 3px #d4d0c8"></div>
<div class="a" style="left:426px;top:95px;width:747px;height:18px;background:linear-gradient(90deg,#0a246a 0%,#2a4590 25%,#6f8fc9 60%,#a6caf0 100%)"></div>
<div class="a" style="left:428px;top:96px"><svg width="16" height="16" viewBox="0 0 16 16"><rect width="16" height="16" fill="#e4f2fa"/><path d="M2 4 Q4 11 8 12 Q12 11 14 4 M5 3 Q6 9 8 12 Q10 9 11 3 M8 2 V12" stroke="#3f93c4" stroke-width="1.1" fill="none"/><path d="M2 14 H14" stroke="#8cc4e0" stroke-width="1"/></svg></div>
<div class="tx" style="left:446px;top:97px;font-weight:bold;color:#fff;font-size:10.7px;letter-spacing:0">Modify Calculated Field</div>
<div class="a" style="left:1155px;top:97px;width:16px;height:14px;background:#d4d0c8;border:1px solid;border-color:#fff #404040 #404040 #fff;box-shadow:inset -1px -1px 0 #808080"><svg class="a" style="left:3px;top:2px" width="9" height="8" viewBox="0 0 9 8"><path d="M0.5 0.5 L8 7.5 M8 0.5 L0.5 7.5" stroke="#000" stroke-width="1.6"/></svg></div>
<div class="a" style="left:429px;top:117px;width:741px;height:644px;border:1px solid #8299c4;border-radius:13px 0 13px 0;background:#f1f1f8;overflow:hidden">
<div class="a lh" style="left:0;top:0;width:739px;height:31px;border-bottom:1px solid #7088b8"></div>
<div class="a dk" style="left:0;top:31px;width:739px;height:29px;border-bottom:1px solid #2c5e98"></div>
<div class="a" style="left:0;top:60px;width:739px;height:28px;background:linear-gradient(#d8e4f9,#e2eafb)"></div>
<div class="a" style="left:0;top:621px;width:739px;height:22px;border-top:1px solid #8299c4;background:linear-gradient(#e8f0fd,#cfe0f9 45%,#b4cdf4 80%,#bdd4f6)"></div>
</div>
<svg class="a" style="left:440px;top:125px" width="15" height="15" viewBox="0 0 15 15"><path d="M1.5 13 L9.5 5" stroke="#8a8f98" stroke-width="2.4" stroke-linecap="round"/><path d="M1.6 13 L5 9.6" stroke="#a07880" stroke-width="2.2" stroke-linecap="round"/><path d="M9 5.5 Q8 3 10 1.8 L11.5 1.5 L10.6 3.6 L11.6 4.6 L13.6 3.6 Q13.6 6 11.2 6.6 Z" fill="#a9aeb8" stroke="#70757f" stroke-width=".5"/><path d="M5.5 5.5 L13 13" stroke="#22262e" stroke-width="2.3" stroke-linecap="round"/><path d="M1.8 4.2 L5.2 1.4 L7.6 3.8 L4.6 6.6 Z" fill="#7d838d" stroke="#4a4e58" stroke-width=".6"/></svg>
<div class="hd" style="left:459px;top:123px">Modify Calculated Field</div>
<svg class="a" style="left:439px;top:155px" width="15" height="16" viewBox="0 0 15 16"><path d="M2 3 Q7 5.5 12.5 11.5" stroke="#e87882" stroke-width="2" stroke-linecap="round" fill="none" opacity=".85"/><path d="M1.8 14.5 Q3 9 7.5 6" stroke="#d8242c" stroke-width="2.8" stroke-linecap="round" fill="none"/><path d="M7.5 6 Q10 4 12.5 2.6" stroke="#e85860" stroke-width="1.6" stroke-linecap="round" fill="none"/></svg>
<div class="ar" style="left:461px;top:157px">Delete Calculated Field</div>
<svg class="a" style="left:600px;top:155px" width="16" height="16" viewBox="0 0 16 16"><circle cx="8" cy="8" r="7" fill="#2438a4" stroke="#e4eafa" stroke-width="1.5"/><circle cx="8" cy="6.5" r="4.5" fill="#4a66d0" opacity=".6"/><text x="8" y="12" text-anchor="middle" font-family="Liberation Sans" font-weight="bold" font-size="11" fill="#fff">?</text></svg>
<div class="ar" style="left:623px;top:157px">Help</div>
<div class="hd" style="left:438px;top:181px;font-size:15.4px;letter-spacing:0">JTD Effective Multiplier</div>
<div class="tx" style="left:440px;top:226px;color:#000">Description</div>
<div class="tx" style="left:440px;top:256px;color:#000">Heading 1</div>
<div class="tx" style="left:440px;top:286px;color:#000">Heading 2</div>
<div class="tx" style="left:769px;top:226px;color:#000">Data Type</div>
<div class="tx" style="left:769px;top:256px;color:#000">Format</div>
<div class="tx" style="left:769px;top:286px;color:#000">Width</div>
<div class="tx" style="left:1002px;top:226px;color:#6a6f7a">Currency</div>
<div class="inp" style="left:515px;top:222px;width:211px;height:20px;background:#f1f1f8">JTD Effective Multiplier</div>
<div class="inp" style="left:515px;top:252px;width:144px;height:20px">JTD Effective</div>
<div class="inp" style="left:515px;top:282px;width:144px;height:20px">Multiplier</div>
<div class="inp" style="left:837px;top:222px;width:150px;height:20px">Numeric<div class="dd"></div></div>
<div class="inp" style="left:1064px;top:222px;width:78px;height:20px;background:#f1f1f8"><div class="dd dis"></div></div>
<div class="inp" style="left:837px;top:252px;width:225px;height:20px">123,456,789.00;-123,456,789.00;<div class="dd" style="width:19px"></div></div>
<svg class="a" style="left:1046px;top:256px" width="13" height="13" viewBox="0 0 13 13"><rect x=".5" y=".5" width="12" height="12" fill="#e8eefb" stroke="#6a7fae"/><rect x="2" y="2" width="4" height="4" fill="#8096c8"/><rect x="7" y="2" width="4" height="4" fill="#8096c8"/><rect x="2" y="7" width="4" height="4" fill="#8096c8"/><rect x="7" y="7" width="4" height="4" fill="#8096c8"/></svg>
<div class="inp" style="left:837px;top:282px;width:55px;height:20px;text-align:right;padding-right:2px;font-size:11px">1.00</div>
<div class="a" style="left:439px;top:323px;width:218px;height:143px;border:1px solid #7f9db9;background:#fff"></div>
<div class="a" style="left:440px;top:324px;width:200px;height:21px;background:linear-gradient(#edf3fe,#dbe6fb 40%,#c3d6f6 65%,#bdd3f6);border-bottom:1px solid #8299c4;border-right:1px solid #8299c4"></div>
<div class="tx" style="left:528px;top:328px;color:#1c3c7c">Field</div>
<div class="tx" style="left:444px;top:349px;color:#000">Revenue - YTD</div>
<div class="tx" style="left:444px;top:369px;color:#000">Expenses - YTD</div>
<div class="tx" style="left:444px;top:389px;color:#000">Indirect Expenses - YTD</div>
<div class="tx" style="left:444px;top:409px;color:#000">Profit - YTD</div>
<div class="tx" style="left:444px;top:429px;color:#000">Profit Percentage - YTD</div>
<div class="tx" style="left:444px;top:449px;color:#000">Revenue - Current</div>
<div class="a" style="left:641px;top:324px;width:15px;height:141px;background:#f3f3f8;border-left:1px solid #e4e6ee"></div>
<div class="a" style="left:641px;top:324px;width:15px;height:16px;border:1px solid #b4b9c6;border-radius:2px;background:linear-gradient(#fdfdfd,#dcdde3)"></div><div class="a" style="left:645px;top:330px;border:4px solid transparent;border-bottom:4px solid #4f5462;border-top:0"></div>
<div class="a" style="left:641px;top:340px;width:14px;height:8px;border:1px solid #b4b9c6;border-radius:2px;background:linear-gradient(90deg,#fcfcfd,#d5d6dd)"></div>
<div class="a" style="left:641px;top:449px;width:15px;height:16px;border:1px solid #b4b9c6;border-radius:2px;background:linear-gradient(#fdfdfd,#dcdde3)"></div><div class="a" style="left:645px;top:455px;border:4px solid transparent;border-top:4px solid #4f5462;border-bottom:0"></div>
<div class="btn " style="left:563px;top:476px;width:94px;height:21px;">Add Field</div>
<div class="grp" style="left:678px;top:325px;width:141px;height:171px"></div>
<div class="lg" style="left:684px;top:321px">Calculator</div>
<div class="btn " style="left:688px;top:341px;width:23px;height:21px;">7</div>
<div class="btn " style="left:721px;top:341px;width:23px;height:21px;">8</div>
<div class="btn " style="left:754px;top:341px;width:23px;height:21px;">9</div>
<div class="btn " style="left:787px;top:341px;width:23px;height:21px;">/</div>
<div class="btn " style="left:688px;top:372px;width:23px;height:21px;">4</div>
<div class="btn " style="left:721px;top:372px;width:23px;height:21px;">5</div>
<div class="btn " style="left:754px;top:372px;width:23px;height:21px;">6</div>
<div class="btn " style="left:787px;top:372px;width:23px;height:21px;">*</div>
<div class="btn " style="left:688px;top:403px;width:23px;height:21px;">1</div>
<div class="btn " style="left:721px;top:403px;width:23px;height:21px;">2</div>
<div class="btn " style="left:754px;top:403px;width:23px;height:21px;">3</div>
<div class="btn " style="left:787px;top:403px;width:23px;height:21px;">-</div>
<div class="btn " style="left:688px;top:434px;width:56px;height:21px;">0</div>
<div class="btn " style="left:754px;top:434px;width:23px;height:21px;">.</div>
<div class="btn " style="left:787px;top:434px;width:23px;height:21px;">+</div>
<div class="btn " style="left:688px;top:465px;width:56px;height:21px;">(..exp..)</div>
<div class="btn " style="left:754px;top:465px;width:23px;height:21px;">(</div>
<div class="btn " style="left:787px;top:465px;width:23px;height:21px;">)</div>
<div class="grp" style="left:841px;top:325px;width:313px;height:120px"></div>
<div class="lg" style="left:852px;top:319px;width:100px"></div>
<div class="cb" style="left:854px;top:319px"></div>
<div class="tx" style="left:873px;top:320px;color:#000">Use a Condition</div>
<div class="btn dis" style="left:851px;top:342px;width:31px;height:21px;">=</div>
<div class="btn dis" style="left:889px;top:342px;width:56px;height:21px;">LIKE</div>
<div class="btn dis" style="left:952px;top:342px;width:31px;height:21px;">&lt;&gt;</div>
<div class="btn dis" style="left:992px;top:342px;width:31px;height:21px;">&lt;</div>
<div class="btn dis" style="left:1032px;top:342px;width:31px;height:21px;">&gt;</div>
<div class="btn dis" style="left:1072px;top:342px;width:31px;height:21px;">&gt;=</div>
<div class="btn dis" style="left:1112px;top:342px;width:31px;height:21px;">&lt;=</div>
<div class="tx" style="left:853px;top:383px;color:#444">Add period:</div>
<div class="inp" style="left:924px;top:379px;width:75px;height:20px;background:#f1f1f8"><div class="dd dis"></div></div>
<div class="btn dis" style="left:1009px;top:379px;width:41px;height:21px;">Add</div>
<div class="btn dis" style="left:1017px;top:413px;width:58px;height:21px;">AND</div>
<div class="btn dis" style="left:1085px;top:413px;width:58px;height:21px;">OR</div>
<div class="btn " style="left:925px;top:476px;width:50px;height:21px;">Undo</div>
<div class="btn " style="left:985px;top:476px;width:50px;height:21px;">Clear</div>
<div class="btn " style="left:1045px;top:476px;width:110px;height:21px;">Check Calculation</div>
<div class="grp" style="left:439px;top:523px;width:715px;height:165px"></div>
<div class="lg" style="left:445px;top:519px">Calculation</div>
<div class="a" style="left:557px;top:539px;width:578px;height:140px;border:1px solid #7f9db9;background:#fff"></div>
<div class="tx" style="left:561px;top:541px;color:#000">[Effective Multiplier - JTD]/2</div>
<div class="tx" style="left:437px;top:703px;color:#000">Perform calculation on</div>
<div class="inp" style="left:565px;top:699px;width:168px;height:20px;padding-left:5px;letter-spacing:-.15px">all detail and total lines<div class="dd"></div></div>
<div class="cb" style="left:755px;top:702px;border-color:#b9bcc4;background:#e6e6ea"></div>
<div class="tx" style="left:774px;top:703px;color:#a9abb4;letter-spacing:-.17px">Sum up calculated amounts on total lines</div>
<div class="btn " style="left:971px;top:773px;width:90px;height:21px;">Save</div>
<div class="a" style="left:974px;top:776px;width:84px;height:15px;border:1px dotted #000"></div>
<div class="btn " style="left:1067px;top:773px;width:91px;height:21px;">Cancel</div>
<svg class="a" style="left:1158px;top:790px" width="14" height="14" viewBox="0 0 14 14"><path d="M13 2 L2 13 M13 6 L6 13 M13 10 L10 13" stroke="#404040" stroke-width="1.3"/><path d="M13 3.3 L3.3 13 M13 7.3 L7.3 13 M13 11.3 L11.3 13" stroke="#fff" stroke-width="1"/></svg>
<!--/DG-->

<!-- ===== taskbar ===== -->
<!--TB-->
<div class="a" style="left:0;top:871px;width:1600px;height:29px;background:#d4d0c8;border-top:2px solid #fff"></div>
<div class="a" style="left:0;top:869px;width:1600px;height:2px;background:#e4ecfa"></div>
<div class="a" style="left:2px;top:876px;width:53px;height:21px;background:#d4d0c8;border:1px solid;border-color:#fff #404040 #404040 #fff;box-shadow:inset -1px -1px 0 #808080"></div>
<svg class="a" style="left:6px;top:879px" width="15" height="15" viewBox="0 0 15 15"><path d="M1 3 Q4 1 7 3 L6 7 Q3 5 0 7 Z" fill="#e0452a"/><path d="M8 3 Q11 5 14 3 L13 7 Q10 9 7 7 Z" fill="#3fa33a"/><path d="M0 8 Q3 6 6 8 L5 12 Q2 10 -1 12 Z" fill="#2f62d0"/><path d="M7 8 Q10 10 13 8 L12 12 Q9 14 6 12 Z" fill="#f0b820"/></svg>
<div class="tx" style="left:21px;top:881px;font-weight:bold;font-size:11px">Start</div>
<div class="a" style="left:61px;top:879px;width:3px;height:18px;border:1px solid;border-color:#fff #808080 #808080 #fff"></div>
<svg class="a" style="left:70px;top:879px" width="16" height="16" viewBox="0 0 16 16"><rect x="1" y="1" width="14" height="14" rx="3" fill="#3f86e0" stroke="#1f4fa8"/><circle cx="8" cy="8" r="4" fill="none" stroke="#fff" stroke-width="1.6"/><path d="M5 8 H11" stroke="#fff" stroke-width="1.4"/></svg>
<div class="a" style="left:94px;top:879px"><svg width="16" height="16" viewBox="0 0 16 16"><path d="M12.8 11 A5.2 5.2 0 1 1 13.2 8.4 H5" fill="none" stroke="#2b78d6" stroke-width="2.6"/><path d="M1.5 14 Q0 10 6 5 Q12 0.5 15 2.2" fill="none" stroke="#e9b830" stroke-width="1.3"/></svg></div>
<svg class="a" style="left:117px;top:879px" width="16" height="16" viewBox="0 0 16 16"><circle cx="8" cy="8" r="7" fill="#fbe08a" stroke="#e09a20" stroke-width="1.4"/><path d="M4.5 6 L8 9 L11.5 6 V11 H4.5 Z" fill="#fff" stroke="#e09a20" stroke-width=".9"/></svg>
<div class="a" style="left:143px;top:879px;width:3px;height:18px;border:1px solid;border-color:#fff #808080 #808080 #fff"></div>
<div class="a" style="left:151px;top:876px;width:160px;height:21px;background:#fff;background-image:repeating-conic-gradient(#d4d0c8 0 25%,#fff 0 50%);background-size:2px 2px;border:1px solid;border-color:#404040 #fff #fff #404040;box-shadow:inset 1px 1px 0 #808080"></div>
<div class="a" style="left:156px;top:880px"><svg width="15" height="15" viewBox="0 0 16 16"><rect width="16" height="16" fill="#e4f2fa"/><path d="M2 4 Q4 11 8 12 Q12 11 14 4 M5 3 Q6 9 8 12 Q10 9 11 3 M8 2 V12" stroke="#3f93c4" stroke-width="1.1" fill="none"/><path d="M2 14 H14" stroke="#8cc4e0" stroke-width="1"/></svg></div>
<div class="tx" style="left:174px;top:881px;font-weight:bold;font-size:11px">Performance Manage...</div>
<div class="a" style="left:313px;top:876px;width:159px;height:21px;background:#d4d0c8;border:1px solid;border-color:#fff #404040 #404040 #fff;box-shadow:inset -1px -1px 0 #808080"></div>
<div class="a" style="left:317px;top:879px"><svg width="16" height="16" viewBox="0 0 16 16"><path d="M12.8 11 A5.2 5.2 0 1 1 13.2 8.4 H5" fill="none" stroke="#2b78d6" stroke-width="2.6"/><path d="M1.5 14 Q0 10 6 5 Q12 0.5 15 2.2" fill="none" stroke="#e9b830" stroke-width="1.3"/></svg></div>
<div class="tx" style="left:336px;top:881px">Deltek Vision Version 6.2 ...</div>
<div class="a" style="left:1480px;top:876px;width:118px;height:21px;border:1px solid;border-color:#808080 #fff #fff #808080"></div>
<div class="a" style="left:1484px;top:879px"><svg width="16" height="16" viewBox="0 0 16 16"><rect width="16" height="16" fill="#e4f2fa"/><path d="M2 4 Q4 11 8 12 Q12 11 14 4 M5 3 Q6 9 8 12 Q10 9 11 3 M8 2 V12" stroke="#3f93c4" stroke-width="1.1" fill="none"/><path d="M2 14 H14" stroke="#8cc4e0" stroke-width="1"/></svg></div>
<svg class="a" style="left:1502px;top:879px" width="17" height="17" viewBox="0 0 17 17"><path d="M5 .5 H12 L16.5 5 V12 L12 16.5 H5 L.5 12 V5 Z" fill="#1030e0"/><path d="M2 10 H7 L10 7 H15 M7 10 L10 7" stroke="#fff" stroke-width="1.5" fill="none"/></svg>
<svg class="a" style="left:1521px;top:880px" width="14" height="14" viewBox="0 0 14 14"><rect x=".5" y=".5" width="13" height="13" fill="#8a8a8a" stroke="#5a5a5a"/><text x="7" y="10" text-anchor="middle" font-family="Liberation Sans" font-weight="bold" font-size="8" fill="#fff">vm</text></svg>
<div class="tx" style="left:1546px;top:881px">4:49 PM</div>
<!--/TB-->

</body></html>
